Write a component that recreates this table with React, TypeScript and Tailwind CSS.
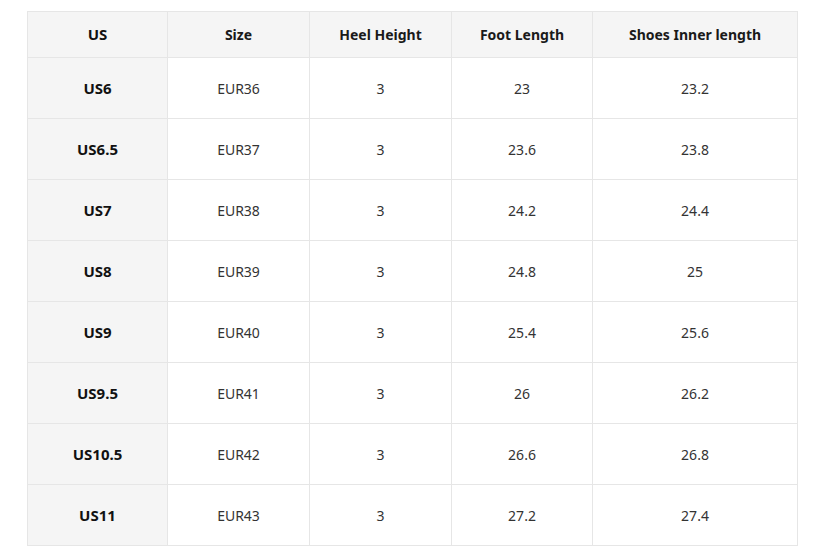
const headers = ['US', 'Size', 'Heel Height', 'Foot Length', 'Shoes Inner length'];

const rows: [string, string, string, string, string][] = [
  ['US6', 'EUR36', '3', '23', '23.2'],
  ['US6.5', 'EUR37', '3', '23.6', '23.8'],
  ['US7', 'EUR38', '3', '24.2', '24.4'],
  ['US8', 'EUR39', '3', '24.8', '25'],
  ['US9', 'EUR40', '3', '25.4', '25.6'],
  ['US9.5', 'EUR41', '3', '26', '26.2'],
  ['US10.5', 'EUR42', '3', '26.6', '26.8'],
  ['US11', 'EUR43', '3', '27.2', '27.4'],
];

const widths = ['w-[140px]', 'w-[142px]', 'w-[142px]', 'w-[141px]', 'w-[205px]'];

export default function App() {
  return (
    <div className="min-h-[556px] w-[814px] bg-white pl-[27px] pt-[11px] font-['Noto_Sans',sans-serif] text-[14px]">
      <table className="table-fixed border-collapse w-[771px]">
        <colgroup>
          {widths.map((w, i) => (
            <col key={i} className={w} />
          ))}
        </colgroup>
        <thead>
          <tr className="h-[46px] bg-[#f5f5f5]">
            {headers.map((h, i) => (
              <th
                key={h}
                className={
                  i === 0
                    ? 'border border-[#e6e6e6] text-center text-[15px] font-bold text-[#111]'
                    : 'border border-[#e6e6e6] text-center font-bold text-[#1a1a1a]'
                }
              >
                {h}
              </th>
            ))}
          </tr>
        </thead>
        <tbody>
          {rows.map((r) => (
            <tr key={r[0]} className="h-[61px]">
              {r.map((c, i) => (
                <td
                  key={i}
                  className={
                    i === 0
                      ? 'border border-[#e6e6e6] bg-[#f5f5f5] text-center text-[15px] font-bold text-[#111]'
                      : 'border border-[#e6e6e6] text-center text-[#333]'
                  }
                >
                  {c}
                </td>
              ))}
            </tr>
          ))}
        </tbody>
      </table>
    </div>
  );
}
